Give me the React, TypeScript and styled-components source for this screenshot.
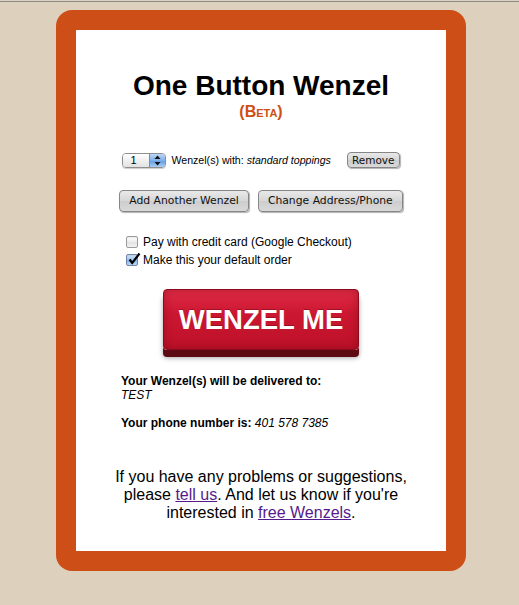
import React from 'react';
import styled, { createGlobalStyle } from 'styled-components';

const GlobalStyle = createGlobalStyle`
  html, body {
    margin: 0;
    padding: 0;
    background-color: #ddd1bd;
    font-family: "Liberation Sans", Arial, Helvetica, sans-serif;
    color: #000;
  }
`;

const TopRule = styled.div`
  height: 1px;
  margin-top: 1px;
  background-color: #8b8b8b;
`;

const Frame = styled.div`
  margin: 8px 0 0 56px;
  width: 370px;
  height: 521px;
  background-color: #fff;
  border: 20px solid #cd4f17;
  border-radius: 16px;
`;

const Title = styled.h1`
  margin: 0;
  padding-top: 42px;
  font-size: 28px;
  line-height: 28px;
  font-weight: bold;
  text-align: center;
`;

const Beta = styled.div`
  margin-top: 4px;
  font-size: 16px;
  line-height: 16px;
  font-weight: bold;
  font-variant: small-caps;
  color: #cd4f17;
  text-align: center;
`;

const Row = styled.div<{ $top: number }>`
  display: flex;
  justify-content: center;
  align-items: center;
  margin-top: ${({ $top }) => $top}px;
`;

const OrderRow = styled(Row)`
  height: 18px;
`;

const Stepper = styled.div`
  display: flex;
  width: 44px;
  height: 15px;
  box-sizing: border-box;
  border: 1px solid #8e8e8e;
  border-radius: 4px;
  overflow: hidden;
  box-shadow: 0 1px 1px rgba(0, 0, 0, 0.2);
`;

const StepperValue = styled.span`
  flex: 1;
  padding-left: 7px;
  font-size: 11px;
  line-height: 13px;
  background: linear-gradient(#ffffff, #f0f0f0 50%, #e2e2e2);
`;

const StepperArrows = styled.span`
  display: flex;
  align-items: center;
  justify-content: center;
  width: 15px;
  border-left: 1px solid #6b8fbf;
  background: linear-gradient(#bcd7f5, #7fb0ea 50%, #5f9ae3 51%, #a9cdf5);
`;

const OrderText = styled.span`
  margin: 0 16px 0 5px;
  font-size: 10.6px;
  line-height: 12px;
`;

const Aqua = styled.button<{ $small?: boolean }>`
  height: ${({ $small }) => ($small ? 16 : 22)}px;
  padding: 0 ${({ $small }) => ($small ? 4 : 9)}px;
  border: 1px solid #868686;
  border-radius: 4px;
  background: linear-gradient(#e9e9e9, #d6d6d6 50%, #cdcdcd 51%, #d9d9d9);
  box-shadow: 1px 1px 1px rgba(0, 0, 0, 0.3);
  font-family: "DejaVu Sans", "Lucida Grande", Verdana, sans-serif;
  font-size: ${({ $small }) => ($small ? 10.5 : 10.8)}px;
  line-height: 14px;
  color: #111;
  white-space: nowrap;
`;

const ButtonRow = styled(Row)`
  gap: 9px;
`;

const CheckList = styled.div`
  margin-top: 21px;
  padding-left: 50px;
`;

const CheckRow = styled.label`
  display: flex;
  align-items: center;
  height: 18px;
  font-size: 12px;
  line-height: 14px;
`;

const Box = styled.span<{ $checked?: boolean }>`
  position: relative;
  width: 12px;
  height: 12px;
  box-sizing: border-box;
  margin-right: 5px;
  border: 1px solid ${({ $checked }) => ($checked ? '#6f87aa' : '#9c9c9c')};
  border-radius: 2px;
  background: ${({ $checked }) =>
    $checked
      ? 'linear-gradient(#d3e5f8, #9cc2ec 50%, #86b3e8 51%, #bcd8f5)'
      : 'linear-gradient(#ffffff, #ececec 50%, #e2e2e2 51%, #f2f2f2)'};
  box-shadow: inset 0 1px 1px rgba(0, 0, 0, 0.08);

  svg {
    position: absolute;
    left: 0;
    top: -3px;
  }
`;

const BigButton = styled.button`
  display: block;
  margin: 20px auto 0;
  width: 196px;
  height: 61px;
  border: 1px solid #8e0b1d;
  border-radius: 4px;
  background: linear-gradient(#df2b46, #cc1731 40%, #bd1129);
  box-shadow: inset 0 0 10px rgba(90, 0, 10, 0.35), 0 7px 0 #5e0a13, 0 8px 5px rgba(0, 0, 0, 0.35);
  font-family: "Liberation Sans", Arial, sans-serif;
  font-size: 27.5px;
  font-weight: bold;
  color: #fff;
  text-shadow: 0 -1px 0 rgba(80, 0, 10, 0.4);
  padding: 0;
`;

const Delivery = styled.div`
  margin-top: 24px;
  padding-left: 45px;
  font-size: 12px;
  line-height: 14px;

  p {
    margin: 0;
  }
  p + p {
    margin-top: 14px;
  }
`;

const Footer = styled.p`
  margin: 38px 0 0;
  padding: 0 30px;
  font-size: 16px;
  line-height: 18px;
  text-align: center;

  a {
    color: #551a8b;
    text-decoration: underline;
  }
`;

const Arrows = () => (
  <svg width="7" height="11" viewBox="0 0 7 11">
    <path d="M3.5 0.5 L6.5 4 H0.5 Z" fill="#111" />
    <path d="M3.5 10.5 L6.5 7 H0.5 Z" fill="#111" />
  </svg>
);

const Check = () => (
  <svg width="14" height="14" viewBox="0 0 14 14">
    <path d="M2.5 7.5 L5.2 11 L12.5 1.5" fill="none" stroke="#000" strokeWidth="2.2" strokeLinejoin="miter" />
  </svg>
);

const App: React.FC = () => {
  return (
    <>
      <GlobalStyle />
      <TopRule />
      <Frame>
        <Title>One Button Wenzel</Title>
        <Beta>(Beta)</Beta>

        <OrderRow $top={31}>
          <Stepper>
            <StepperValue>1</StepperValue>
            <StepperArrows>
              <Arrows />
            </StepperArrows>
          </Stepper>
          <OrderText>
            Wenzel(s) with: <i>standard toppings</i>
          </OrderText>
          <Aqua $small>Remove</Aqua>
        </OrderRow>

        <ButtonRow $top={21}>
          <Aqua>Add Another Wenzel</Aqua>
          <Aqua>Change Address/Phone</Aqua>
        </ButtonRow>

        <CheckList>
          <CheckRow>
            <Box />
            Pay with credit card (Google Checkout)
          </CheckRow>
          <CheckRow>
            <Box $checked>
              <Check />
            </Box>
            Make this your default order
          </CheckRow>
        </CheckList>

        <BigButton>WENZEL ME</BigButton>

        <Delivery>
          <p>
            <b>Your Wenzel(s) will be delivered to:</b>
            <br />
            <i>TEST</i>
          </p>
          <p>
            <b>Your phone number is:</b> <i>401 578 7385</i>
          </p>
        </Delivery>

        <Footer>
          If you have any problems or suggestions, please <a href="#">tell us</a>. And let us know if
          you're interested in <a href="#">free Wenzels</a>.
        </Footer>
      </Frame>
    </>
  );
};

export default App;
